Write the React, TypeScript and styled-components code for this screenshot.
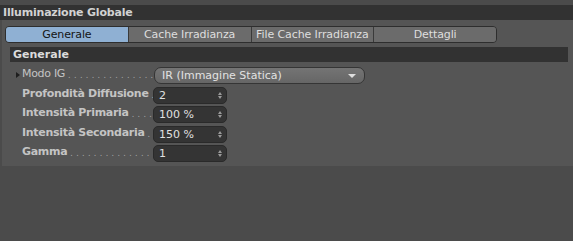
import React from "react";
import styled, { createGlobalStyle } from "styled-components";

const Global = createGlobalStyle`
  html, body { margin: 0; padding: 0; background: #4b4b4b; }
  body { font-family: "DejaVu Sans", "Liberation Sans", sans-serif; }
`;

const Page = styled.div`
  width: 573px;
  height: 241px;
  background: #4b4b4b;
  padding-top: 5px;
  box-sizing: border-box;
  overflow: hidden;
`;

const TitleBar = styled.div`
  height: 15px;
  background: #323232;
  color: #d2d2d2;
  font-weight: bold;
  font-size: 11px;
  line-height: 15px;
  padding-left: 3px;
  letter-spacing: -0.2px;
`;

const Panel = styled.div`
  margin-left: 2px;
  background: #555555;
  padding: 6px 5px 4px 3px;
  display: flex;
  flex-direction: column;
`;

const Tabs = styled.div`
  display: flex;
  width: 492px;
  height: 17px;
  border: 1px solid #2e2e2e;
  border-radius: 4px;
  overflow: hidden;
  box-sizing: border-box;
`;

const Tab = styled.div<{ $active?: boolean }>`
  flex: 1;
  display: flex;
  align-items: center;
  justify-content: center;
  font-size: 11px;
  letter-spacing: -0.1px;
  background: ${(p) => (p.$active ? "#8fb0d3" : "#6b6b6b")};
  color: ${(p) => (p.$active ? "#141414" : "#dedede")};
  border-left: 1px solid #3a3a3a;
  &:first-child { border-left: none; }
`;

const Section = styled.div`
  margin: 4px 0 0 5px;
  height: 15px;
  background: #323232;
  color: #dcdcdc;
  font-weight: bold;
  font-size: 11px;
  line-height: 15px;
  padding-left: 3px;
`;

const Rows = styled.div`
  display: flex;
  flex-direction: column;
  padding: 5px 0 0 17px;
  gap: 2.5px;
`;

const Row = styled.div`
  display: flex;
  align-items: center;
  height: 17px;
  position: relative;
`;

const Arrow = styled.span`
  position: absolute;
  left: -6px;
  top: 5px;
  width: 0;
  height: 0;
  border-top: 3px solid transparent;
  border-bottom: 3px solid transparent;
  border-left: 4px solid #1e1e1e;
`;

const Label = styled.div<{ $bold?: boolean }>`
  width: 131px;
  font-size: 11px;
  font-weight: ${(p) => (p.$bold ? "bold" : "normal")};
  letter-spacing: -0.3px;
  color: #c4c4c4;
  white-space: nowrap;
  overflow: hidden;
  display: flex;
  &::after {
    content: " . . . . . . . . . . . . . . . . . . . . . . . . .";
    font-weight: normal;
    font-size: 8px;
    color: #a8a8a8;
    padding-left: 3px;
    letter-spacing: 0.4px;
    line-height: 17px;
  }
`;

const Select = styled.div`
  width: 211px;
  height: 17px;
  margin-left: 1px;
  box-sizing: border-box;
  border: 1px solid #353535;
  border-radius: 7px;
  background: linear-gradient(#747474, #666666);
  color: #e2e2e2;
  font-size: 11px;
  display: flex;
  align-items: center;
  justify-content: space-between;
  padding: 0 8px 0 7px;
`;

const Caret = styled.span`
  width: 0;
  height: 0;
  border-left: 4px solid transparent;
  border-right: 4px solid transparent;
  border-top: 4px solid #dedede;
`;

const NumField = styled.div`
  width: 74px;
  height: 17px;
  box-sizing: border-box;
  border: 1px solid #2a2a2a;
  border-radius: 5px;
  background: #343434;
  color: #e0e0e0;
  font-size: 11px;
  display: flex;
  align-items: center;
  justify-content: space-between;
  padding: 0 4px 0 5px;
`;

const Spin = styled.span`
  display: flex;
  flex-direction: column;
  gap: 1px;
  &::before, &::after {
    content: "";
    width: 0;
    height: 0;
    border-left: 2.5px solid transparent;
    border-right: 2.5px solid transparent;
  }
  &::before { border-bottom: 3px solid #9a9a9a; }
  &::after { border-top: 3px solid #9a9a9a; }
`;

const fields = [
  { label: "Profondità Diffusione", value: "2" },
  { label: "Intensità Primaria", value: "100 %" },
  { label: "Intensità Secondaria", value: "150 %" },
  { label: "Gamma", value: "1" },
];

export default function App() {
  return (
    <>
      <Global />
      <Page>
        <TitleBar>Illuminazione Globale</TitleBar>
        <Panel>
          <Tabs>
            <Tab $active>Generale</Tab>
            <Tab>Cache Irradianza</Tab>
            <Tab>File Cache Irradianza</Tab>
            <Tab>Dettagli</Tab>
          </Tabs>
          <Section>Generale</Section>
          <Rows>
            <Row>
              <Arrow />
              <Label>Modo IG</Label>
              <Select>
                <span>IR (Immagine Statica)</span>
                <Caret />
              </Select>
            </Row>
            {fields.map((f) => (
              <Row key={f.label}>
                <Label $bold>{f.label}</Label>
                <NumField>
                  <span>{f.value}</span>
                  <Spin />
                </NumField>
              </Row>
            ))}
          </Rows>
        </Panel>
      </Page>
    </>
  );
}
